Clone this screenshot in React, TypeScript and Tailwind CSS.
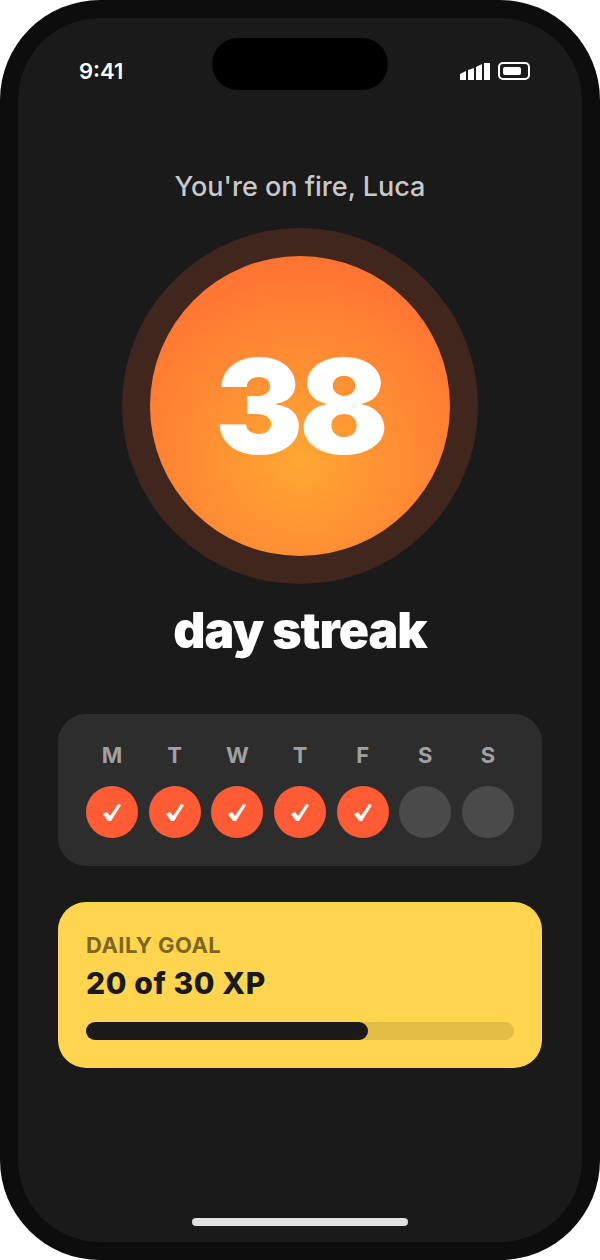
const days = [
  { label: "M", done: true },
  { label: "T", done: true },
  { label: "W", done: true },
  { label: "T", done: true },
  { label: "F", done: true },
  { label: "S", done: false },
  { label: "S", done: false },
];

function SignalIcon() {
  return (
    <svg width="30" height="17" viewBox="0 0 30 17" fill="#fff">
      <path d="M0 11 L6 8 V17 H0 Z" />
      <path d="M8 7 L14 5 V17 H8 Z" />
      <path d="M16 4 L22 1 V17 H16 Z" />
      <rect x="24" y="0" width="6" height="17" />
    </svg>
  );
}

function BatteryIcon() {
  return (
    <div className="flex h-[18px] w-[32px] items-center rounded-[5px] border-2 border-white pl-[3px]">
      <div className="h-[8px] w-[18px] rounded-[2px] bg-white" />
    </div>
  );
}

function CheckIcon() {
  return (
    <svg width="18" height="18" viewBox="0 0 18 18" fill="#fff" className="mt-[2px]">
      <path d="M0 10 L4 8 L7 12 L15 0 L18 1 L8 17 L5 17 Z" />
    </svg>
  );
}

export default function App() {
  return (
    <div className="h-[1260px] w-[600px] bg-white font-['Inter',sans-serif]">
      <div className="h-full rounded-[100px] bg-[#0d0d0d] p-[18px]">
        <div className="relative flex h-full flex-col items-center rounded-[82px] bg-[#1a1a1a]">
          <div className="absolute left-[194px] top-[20px] h-[52px] w-[176px] rounded-[26px] bg-black" />

          <div className="flex h-[36px] w-full items-center justify-between pl-[61px] pr-[52px] mt-[35px]">
            <span className="text-[22px] font-semibold text-white">9:41</span>
            <div className="flex items-center gap-[8px]">
              <SignalIcon />
              <BatteryIcon />
            </div>
          </div>

          <p className="mt-[80px] text-[27px] leading-[36px] font-medium text-[#c8c8c8]">
            You're on fire, Luca
          </p>

          <div className="mt-[23px] flex h-[356px] w-[356px] items-center justify-center rounded-full bg-[#40261c]">
            <div className="flex h-[300px] w-[300px] items-center justify-center rounded-full bg-[radial-gradient(circle_at_50%_68%,#ffa733_0%,#ff6633_100%)]">
              <span className="text-[132px] leading-none font-black tracking-[-0.03em] text-white">
                38
              </span>
            </div>
          </div>

          <p className="mt-[14px] text-[50px] leading-[64px] font-black tracking-[-0.02em] text-white">
            day streak
          </p>

          <div className="mt-[52px] w-[484px] rounded-[28px] bg-[#2d2d2d] px-[28px] pt-[26px] pb-[28px]">
            <div className="flex justify-between">
              {days.map((day, i) => (
                <div key={i} className="flex w-[52px] flex-col items-center gap-[16px]">
                  <span className="text-[22px] leading-[30px] font-bold text-[#a0a0a0]">{day.label}</span>
                  {day.done ? (
                    <div className="flex h-[52px] w-[52px] items-center justify-center rounded-full bg-[#ff5c35]">
                      <CheckIcon />
                    </div>
                  ) : (
                    <div className="h-[52px] w-[52px] rounded-full bg-[#4a4a4a]" />
                  )}
                </div>
              ))}
            </div>
          </div>

          <div className="mt-[36px] w-[484px] rounded-[28px] bg-[#ffd54f] px-[28px] pt-[28px] pb-[28px]">
            <p className="text-[22px] leading-[30px] font-bold tracking-[0.02em] text-[#7d6720]">DAILY GOAL</p>
            <p className="mt-[4px] text-[30px] leading-[38px] font-extrabold tracking-[0.02em] text-[#1a1a1a]">20 of 30 XP</p>
            <div className="mt-[20px] h-[18px] w-full rounded-full bg-[#e0bd45]">
              <div className="h-full w-[66%] rounded-full bg-[#1a1a1a]" />
            </div>
          </div>

          <div className="mt-auto mb-[16px] h-[8px] w-[216px] rounded-full bg-[#e0e0e0]" />
        </div>
      </div>
    </div>
  );
}
